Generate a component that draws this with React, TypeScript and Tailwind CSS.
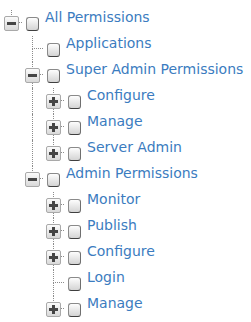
import React from 'react';

type Node = {
  label: string;
  open?: boolean;
  leaf?: boolean;
  children?: Node[];
};

const tree: Node = {
  label: 'All Permissions',
  open: true,
  children: [
    { label: 'Applications', leaf: true },
    {
      label: 'Super Admin Permissions',
      open: true,
      children: [{ label: 'Configure' }, { label: 'Manage' }, { label: 'Server Admin' }],
    },
    {
      label: 'Admin Permissions',
      open: true,
      children: [
        { label: 'Monitor' },
        { label: 'Publish' },
        { label: 'Configure' },
        { label: 'Login', leaf: true },
        { label: 'Manage' },
      ],
    },
  ],
};

type Row = { node: Node; guides: boolean[]; last: boolean };

function flatten(node: Node, guides: boolean[], last: boolean, out: Row[]) {
  out.push({ node, guides, last });
  if (node.open && node.children) {
    node.children.forEach((c, i) =>
      flatten(c, [...guides, !last], i === node.children!.length - 1, out)
    );
  }
  return out;
}

const rows = flatten(tree, [], true, []);

function Toggle({ open }: { open: boolean }) {
  return (
    <div className="absolute left-[3px] top-[6px] w-[15px] h-[15px] rounded-[2px] border border-[#a9a9a9] bg-gradient-to-b from-[#fbfbfb] to-[#d9d9d9] flex items-center justify-center">
      <div className="relative w-[9px] h-[9px] flex items-center justify-center">
        <div className="w-[9px] h-[3px] bg-[#454545]" />
        {!open && <div className="absolute left-[3px] top-0 w-[3px] h-[9px] bg-[#454545]" />}
      </div>
    </div>
  );
}

function Checkbox() {
  return (
    <div className="w-[13px] h-[14px] mt-px rounded-[3px] border border-[#8a8a8a] border-b-[#3f3f3f] border-r-[#6f6f6f] bg-gradient-to-b from-[#fdfdfd] to-[#d4d4d4]" />
  );
}

function Connector({ last, toggle, open }: { last: boolean; toggle: boolean; open: boolean }) {
  return (
    <div className="relative w-[21px] h-full grid grid-rows-[13px_13px]">
      <div className="grid grid-cols-[10px_11px]">
        <div />
        <div className="border-l border-b border-dotted border-[#8c8c8c]" />
      </div>
      <div className="grid grid-cols-[10px_11px]">
        <div />
        <div className={last ? '' : 'border-l border-dotted border-[#8c8c8c]'} />
      </div>
      {toggle && <Toggle open={open} />}
    </div>
  );
}

export default function App() {
  return (
    <div className="pt-[10px] pl-px bg-white w-[251px] h-[322px] font-['DejaVu_Sans',sans-serif]">
      {rows.map((r, i) => (
        <div key={i} className="flex h-[26px]">
          {r.guides.map((g, j) => (
            <div key={j} className="w-[21px] h-full grid grid-cols-[10px_11px]">
              <div />
              <div className={g ? 'border-l border-dotted border-[#8c8c8c]' : ''} />
            </div>
          ))}
          <Connector last={r.last} toggle={!r.node.leaf} open={!!r.node.open} />
          <div className="w-[21px] h-full flex items-center justify-center">
            <Checkbox />
          </div>
          <span className="ml-[2px] -mt-[1px] text-[14px] leading-[16px] text-[#3b7cc0] whitespace-nowrap">
            {r.node.label}
          </span>
        </div>
      ))}
    </div>
  );
}
